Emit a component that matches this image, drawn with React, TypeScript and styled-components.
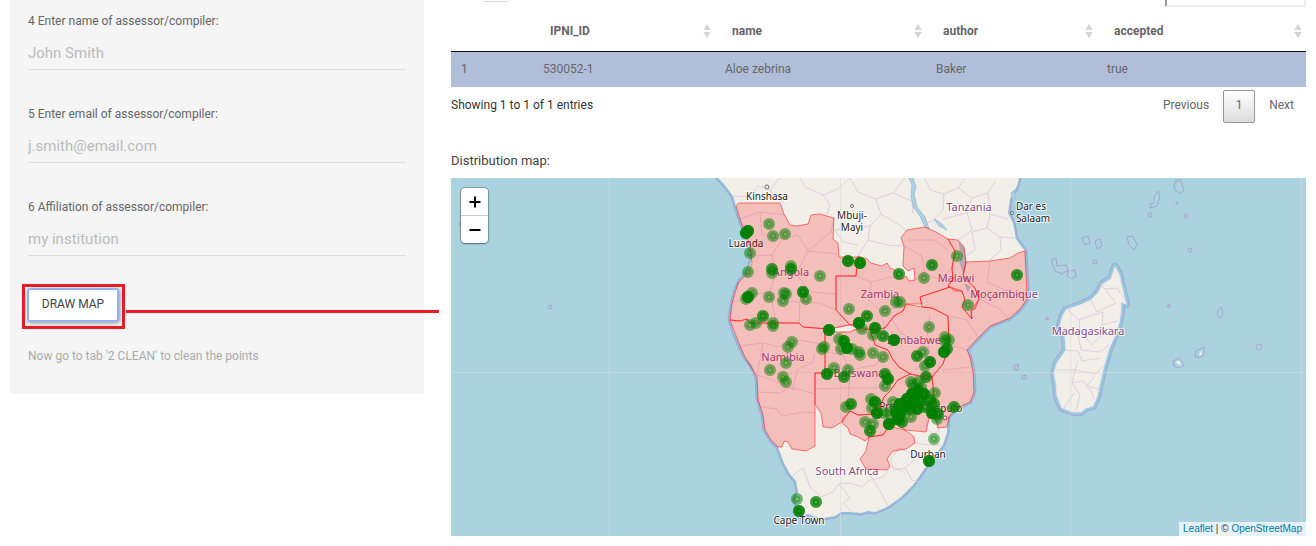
import React from 'react';
import styled, { createGlobalStyle } from 'styled-components';

const GlobalStyle = createGlobalStyle`
  *, *::before, *::after { box-sizing: border-box; }
  body {
    margin: 0;
    background: #fff;
    color: #444;
    font-family: Roboto, 'Liberation Sans', sans-serif;
    font-size: 12px;
    line-height: 18px;
  }
  button, input, select { font-family: inherit; }
`;

const Page = styled.div`
  display: grid;
  grid-template-columns: minmax(0, 414fr) minmax(0, 855fr);
  column-gap: 27px;
  align-items: start;
  padding: 0 10px 10px;
`;

const Sidebar = styled.aside`
  position: relative;
  padding: 12px 18px 29px;
  background: #f5f5f5;
`;

const Fields = styled.div`
  display: flex;
  flex-direction: column;
  gap: 35px;
`;

const Field = styled.div`
  display: flex;
  flex-direction: column;
  gap: 5px;
`;

const Label = styled.label`
  color: #666;
`;

const TextInput = styled.input`
  width: 100%;
  height: 35px;
  padding: 2px 0 0;
  border: 0;
  border-bottom: 1px solid #ddd;
  background: transparent;
  color: #666;
  font-size: 15px;
  outline: none;
  &::placeholder { color: #bbb; opacity: 1; }
`;

const Callout = styled.div`
  width: 103px;
  margin: 28px 0 0 -6px;
  padding: 1px 3px 4px 2px;
  border: 3px solid #ed1c24;
`;

const CalloutLine = styled.div`
  position: absolute;
  top: 310px;
  left: 116px;
  right: -15px;
  height: 3px;
  background: #ed1c24;
`;

const DrawButton = styled.button`
  display: block;
  width: 100%;
  height: 34px;
  padding: 0 0 2px;
  border: 2px solid #8fb3f3;
  border-radius: 3px;
  background: #fff;
  box-shadow: 1px 1px 4px rgba(0, 0, 0, 0.4);
  color: #444;
  font-size: 12px;
  text-transform: uppercase;
  white-space: nowrap;
`;

const Help = styled.p`
  margin: 18px 0 0;
  color: #aaa;
`;

const Main = styled.main`
  min-width: 0;
`;

const TableTools = styled.div`
  display: flex;
  align-items: flex-end;
  justify-content: space-between;
  height: 7px;
  overflow: hidden;
`;

const LengthSelect = styled.select`
  flex: none;
  width: 25px;
  height: 30px;
  margin: 0 0 5px 32px;
  border: 0;
  border-bottom: 1px solid #ddd;
  background: transparent;
  appearance: none;
`;

const SearchInput = styled.input`
  flex: none;
  width: 141px;
  height: 27px;
  border: 2px solid #eee;
  border-top-color: #999;
  border-left-color: #999;
  background: #fff;
`;

const DataTable = styled.table`
  width: 100%;
  table-layout: fixed;
  border-collapse: separate;
  border-spacing: 0;
  color: #666;
`;

const Col = styled.col<{ $w?: number }>`
  width: ${(p) => (p.$w ? `${p.$w}px` : 'auto')};
`;

const HeadCell = styled.th`
  height: 45px;
  padding: 4px 4px 0 17px;
  border-bottom: 1px solid #111;
  font-weight: 700;
  text-align: left;
`;

const HeadInner = styled.span`
  display: flex;
  align-items: center;
  justify-content: space-between;
`;

const Cell = styled.td`
  height: 35px;
  padding: 0 10px 2px;
  background: #b0bed9;
`;

const TableFooter = styled.div`
  display: flex;
  justify-content: space-between;
  align-items: center;
  height: 36px;
  color: #333;
`;

const Pager = styled.nav`
  display: flex;
  gap: 2px;
  padding-top: 3px;
`;

const PageButton = styled.button<{ $current?: boolean }>`
  min-width: 32px;
  height: 33px;
  padding: 0 11px 4px;
  border: 1px solid ${(p) => (p.$current ? '#979797' : 'transparent')};
  border-radius: 2px;
  background: ${(p) => (p.$current ? 'linear-gradient(#fff, #dcdcdc)' : 'transparent')};
  color: #666;
  font-size: 12px;
`;

const MapTitle = styled.h2`
  margin: 29px 0 8px;
  color: #444;
  font-size: 13px;
  font-weight: 400;
  line-height: 18px;
`;

const MapFrame = styled.div`
  position: relative;
  height: 358px;
  overflow: hidden;
  background: #aad3df;
`;

const MapSvg = styled.svg`
  display: block;
  width: 100%;
  height: 100%;
`;

const ZoomControl = styled.div`
  position: absolute;
  top: 10px;
  left: 10px;
  display: flex;
  flex-direction: column;
  border-radius: 4px;
  background: #fff;
  box-shadow: 0 0 0 1px rgba(0, 0, 0, 0.25), 0 1px 2px rgba(0, 0, 0, 0.3);
`;

const ZoomButton = styled.button`
  display: grid;
  place-items: center;
  width: 27px;
  height: 27px;
  padding: 0;
  border: 0;
  background: transparent;
  & + & { height: 28px; border-top: 1px solid #ccc; }
`;

const Attribution = styled.div`
  position: absolute;
  right: 0;
  bottom: 0;
  padding: 0 4px;
  background: rgba(255, 255, 255, 0.7);
  color: #333;
  font: 10px/14px 'Liberation Sans', sans-serif;
  a { color: #0078a8; text-decoration: none; }
`;

const fields = [
  { id: 'name', label: '4 Enter name of assessor/compiler:', hint: 'John Smith' },
  { id: 'email', label: '5 Enter email of assessor/compiler:', hint: 'j.smith@email.com' },
  { id: 'affiliation', label: '6 Affiliation of assessor/compiler:', hint: 'my institution' },
];

const headers = ['IPNI_ID', 'name', 'author', 'accepted'];
const record = ['530052-1', 'Aloe zebrina', 'Baker', 'true'];

const MAINLAND =
  'M718 178L724 184L733 196L736 206L740 219L746 234L750 246L752 258L748 272L740 281L735 292L732 305L730 320L734 332L740 346L745 357L752 366L757 378L758 398L763 415L765 430L771 440L778 447L784 463L790 474L796 481L798 492L795 499L797 507L801 512L802 517L807 514L813 516L823 518L835 516L841 512L850 512L861 513L868 511L875 512L887 507L900 498L913 485L925 468L933 457L943 445L947 432L948 417L957 408L970 402L974 392L973 372L970 358L967 350L977 339L990 326L1010 318L1020 309L1027 299L1027 286L1026 273L1025 251L1016 239L1013 223L1008 213L1010 199L1017 186L1019 178Z';

const MADAGASCAR =
  'M1115 267L1119 274L1122 287L1125 300L1126 304L1121 302L1121 312L1119 323L1116 333L1109 349L1104 366L1100 383L1097 397L1093 406L1086 408L1081 412L1073 412L1062 408L1057 396L1056 383L1054 373L1057 363L1066 350L1065 337L1060 325L1063 315L1066 310L1080 305L1091 300L1098 293L1103 284L1111 279Z';

const COUNTRIES = [
  // Angola
  'M736 206L739 203L780 203L784 214L790 225L797 226L808 224L811 215L820 214L834 218L833 239L838 243L839 257L858 257L856 276L836 276L836 310L850 325L829 329L803 327L799 323L750 323L747 319L740 321L730 320L732 303L738 283L748 273L752 263L750 246L746 236L740 219Z',
  // Zambia
  'M858 256L867 259L871 263L882 266L887 263L890 268L895 270L899 278L903 279L906 276L909 281L915 280L914 268L908 271L903 266L904 246L901 238L907 230L925 227L936 232L948 239L955 251L952 268L953 279L948 286L950 287L920 297L922 304L906 304L903 311L894 316L885 328L875 330L861 329L850 325L836 310L836 276L856 276Z',
  // Malawi
  'M948 239L958 240L964 247L966 262L963 275L968 282L975 288L979 299L975 309L971 311L972 319L962 307L965 300L962 291L955 291L948 286L953 279L952 268L955 251Z',
  // Mozambique
  'M966 262L990 261L1010 258L1018 253L1025 251L1026 273L1027 299L1020 309L1010 318L990 326L977 339L967 350L970 357L973 372L974 392L970 402L957 408L949 417L947 427L938 428L936 420L935 403L932 377L943 364L949 345L948 316L932 308L922 307L920 297L950 287L962 291L965 300L962 307L972 319L971 311L979 299L975 288L963 275Z',
  // Zimbabwe
  'M870 329L885 328L894 316L903 311L906 304L922 307L932 308L948 316L949 345L943 364L932 377L925 377L910 374L899 367L892 358L888 350L875 345Z',
  // Namibia
  'M730 320L740 321L747 319L750 323L799 323L803 327L829 329L854 324L859 329L844 332L825 331L825 373L815 373L815 446L806 451L792 449L788 442L784 441L782 447L778 447L771 440L765 430L763 415L758 400L757 377L745 357L740 346Z',
  // Botswana
  'M825 331L844 332L859 329L870 329L875 345L888 350L892 358L899 367L910 374L898 380L890 391L884 397L881 404L875 414L858 415L850 411L842 422L832 428L823 427L821 413L815 404L815 373L825 373Z',
  // Northern provinces of South Africa
  'M910 374L925 377L932 377L935 403L936 420L929 418L926 432L905 430L897 425L889 426L883 435L869 437L865 441L858 437L850 434L848 428L843 424L842 420L850 411L858 415L875 414L881 404L884 397L890 391L898 380Z',
  'M869 437L883 435L889 426L905 430L914 437L915 443L906 449L893 451L887 459L890 466L887 470L866 469L860 459L866 451Z',
];

const PROVINCES = [
  'M733 196L750 197L758 186L770 190L780 178M770 190L784 203M800 178L805 187L823 195L838 189L850 178M823 195L830 205L827 214M850 178L858 192L876 199L893 193L905 178M876 199L881 214L870 226L852 228L834 230M881 214L898 224L906 231M893 193L912 201L913 214M870 226L868 240L858 256M868 240L887 245L904 246M835 230L843 242L858 245',
  'M925 178L930 190L944 194L958 188L965 178M944 194L943 210L934 220L925 224M958 188L972 198L988 193L996 180M972 198L967 213L972 230L958 240M967 213L943 219M988 193L990 214L1008 219M990 214L987 228L972 232L975 250M987 228L1000 237L1016 238M975 250L967 255M1000 237L1001 250L990 260',
  'M740 219L760 212L785 215M760 212L762 235L782 239L798 235L808 251L838 254M752 256L772 255L782 239M772 255L775 275L796 274L808 251M732 303L750 295L770 292L775 275M770 292L776 322M796 274L810 292L836 294M776 300L800 302L799 323M808 251L831 232L834 218M800 302L820 303L836 310',
  'M856 276L871 282L890 277L899 278M871 282L869 301L880 310L885 328M904 246L922 256L925 274L915 280M925 274L940 279L952 268M880 310L903 307M907 240L935 240L948 250M979 299L998 308L1008 318M990 261L987 282L1005 290L1027 295M950 316L967 320L978 337M949 345L967 350M942 370L970 367',
  'M740 346L763 343L778 347L800 340L825 345M763 343L757 375L780 383L793 390L797 370L813 362L815 354M758 392L780 393L790 387L815 394M762 407L777 409L782 416L803 412L815 413M825 352L843 355L850 370L849 388L815 389M849 388L877 388L892 380M850 370L875 365L884 355M849 388L847 411M892 320L901 333L915 342L927 338L930 355L915 370M901 333L888 345M930 315L927 338L948 345',
  'M793 475L803 468L810 487L821 497L833 492L839 484L850 483L862 487L870 480L883 477L892 466M839 484L850 498L843 503L853 513M890 460L899 448L910 453L914 460L905 468L894 470ZM905 468L912 480L918 482M892 466L905 473M927 418L937 418L939 431L933 434L926 428ZM914 443L930 445L942 445M870 475L880 491L888 506',
  'M1100 283L1105 289L1117 288L1124 298M1105 289L1116 303L1103 309L1097 312L1091 300M1068 310L1079 320L1093 315L1103 312L1102 325L1118 321M1079 320L1080 331L1103 333L1102 325M1061 327L1078 333L1081 350L1100 352L1109 345M1080 331L1092 345L1103 333M1066 350L1078 351L1082 361L1100 358M1078 361L1075 370L1057 370M1075 370L1096 374L1103 366M1075 370L1072 383L1083 381L1091 391L1094 399M1072 383L1080 395L1076 411M1064 408L1074 393M1094 377L1087 386L1098 389',
];

const ISLETS = [
  'M1154 197L1158 191L1160 196L1157 206L1150 208L1150 204L1154 203Z',
  'M1174 184L1180 179L1184 190L1181 194L1175 190Z',
  'M1127 237L1133 236L1137 245L1134 250L1129 245Z',
  'M1082 238L1088 236L1090 243L1085 245Z',
  'M1095 241L1100 239L1102 246L1097 249Z',
  'M1051 260L1056 258L1057 266L1066 265L1068 270L1062 274L1055 271Z',
  'M1068 271L1075 270L1076 276L1071 279L1067 275Z',
  'M1218 310L1221 307L1223 313L1220 319L1217 315Z',
  'M1196 351L1204 347L1204 355L1199 358L1195 356Z',
  'M1173 361L1179 358L1184 365L1180 368L1174 366Z',
  'M1014 366L1018 364L1018 370L1014 370Z',
  'M1022 376L1026 375L1026 379L1022 379Z',
  'M1046 317L1049 319L1046 320Z',
  'M1167 307L1170 307L1169 304Z',
];

const DOTS = [
  [1150, 215, 2], [1186, 216, 2], [1190, 250, 2], [1095, 262, 2], [1177, 203, 1],
  [1259, 347, 3], [550, 307, 2], [461, 224, 2], [1176, 181, 1],
];

type MapLabel = { x: number; y: number; text: string; country?: boolean };

const LABELS: MapLabel[] = [
  { x: 767, y: 200, text: 'Kinshasa' },
  { x: 852, y: 219, text: 'Mbuji-' },
  { x: 852, y: 231, text: 'Mayi' },
  { x: 746, y: 247, text: 'Luanda' },
  { x: 1031, y: 210, text: 'Dar es' },
  { x: 1033, y: 222, text: 'Salaam' },
  { x: 799, y: 524, text: 'Cape Town' },
  { x: 928, y: 458, text: 'Durban' },
  { x: 944, y: 412, text: 'Maputo' },
  { x: 898, y: 410, text: 'Pretoria' },
  { x: 969, y: 211, text: 'Tanzania', country: true },
  { x: 791, y: 276, text: 'Angola', country: true },
  { x: 880, y: 298, text: 'Zambia', country: true },
  { x: 956, y: 282, text: 'Malawi', country: true },
  { x: 1004, y: 298, text: 'Moçambique', country: true },
  { x: 914, y: 344, text: 'Zimbabwe', country: true },
  { x: 783, y: 361, text: 'Namibia', country: true },
  { x: 859, y: 377, text: 'Botswana', country: true },
  { x: 847, y: 475, text: 'South Africa', country: true },
  { x: 1088, y: 335, text: 'Madagasikara', country: true },
];

// x, y and the number of records stacked on the spot
const POINTS = [
  [769, 224, 1], [748, 231, 4], [746, 233, 4], [773, 236, 1], [785, 234, 1], [750, 253, 1],
  [748, 272, 1], [772, 269, 2], [772, 273, 1], [791, 269, 2], [791, 266, 1], [820, 276, 1],
  [848, 261, 3], [860, 263, 4], [752, 293, 1], [748, 297, 4], [746, 299, 1], [769, 297, 1],
  [784, 293, 1], [783, 301, 1], [786, 294, 1], [803, 292, 3], [806, 299, 1], [763, 316, 2],
  [756, 323, 1], [750, 325, 1], [773, 323, 1], [773, 326, 1], [849, 309, 1], [885, 311, 1],
  [867, 316, 2], [859, 323, 4], [862, 329, 1], [875, 328, 3], [873, 335, 1], [883, 336, 2],
  [829, 330, 4], [792, 342, 1], [788, 347, 1], [822, 349, 1], [824, 347, 1], [839, 339, 1],
  [844, 341, 3], [847, 348, 4], [852, 349, 1], [841, 349, 1], [859, 352, 1], [860, 355, 1],
  [873, 353, 1], [883, 357, 1], [957, 256, 1], [932, 265, 2], [924, 278, 1], [899, 274, 2],
  [1017, 275, 2], [896, 302, 1], [900, 302, 1], [968, 305, 1], [929, 327, 1], [894, 340, 4],
  [945, 337, 1], [945, 341, 1], [949, 340, 1], [944, 352, 4], [947, 349, 2], [917, 356, 2],
  [923, 352, 1], [930, 362, 3], [925, 366, 1], [786, 363, 1], [770, 370, 1], [783, 377, 1],
  [786, 382, 1], [834, 368, 1], [827, 374, 3], [848, 370, 1], [844, 377, 2], [885, 374, 2],
  [888, 379, 3], [885, 386, 1], [851, 404, 2], [846, 407, 1], [871, 399, 1], [875, 402, 3],
  [877, 413, 4], [872, 408, 1], [865, 422, 1], [873, 424, 1], [870, 431, 2], [797, 499, 1],
  [816, 502, 2], [799, 511, 3], [926, 377, 2], [911, 382, 1], [918, 382, 1], [934, 439, 1],
  [929, 461, 4], [954, 407, 2], [893, 402, 1], [889, 424, 5], [898, 419, 5], [896, 412, 5],
  [900, 404, 4], [907, 399, 4], [912, 394, 5], [918, 391, 5], [924, 394, 4], [917, 409, 4],
  [930, 400, 2], [932, 413, 4], [938, 414, 2], [935, 393, 1], [934, 404, 2], [889, 413, 1],
  [911, 417, 1], [902, 422, 2], [909, 409, 2], [925, 407, 2], [921, 387, 1], [913, 385, 1],
  [905, 407, 3], [914, 401, 4], [920, 400, 3], [937, 419, 1], [884, 413, 1], [900, 414, 4],
];

const SortIcon = () => (
  <svg width="8" height="14" viewBox="0 0 8 14" aria-hidden="true">
    <path d="M4 0L7.700 6H.3ZM4 14L.3 8H7.700Z" fill="#d4d4d4" />
  </svg>
);

const DistributionMap = () => (
  <MapSvg viewBox="451 178 855 358" preserveAspectRatio="xMidYMid slice" role="img" aria-label="Distribution map">
    <g fill="none" stroke="#a7a6d3" strokeWidth="5" strokeLinejoin="round">
      <path d={MAINLAND} />
      <path d={MADAGASCAR} strokeWidth="8" />
    </g>
    <g fill="none" stroke="#8cc0dc" strokeWidth="3" strokeLinejoin="round">
      <path d={MAINLAND} />
      <path d={MADAGASCAR} stroke="#93c9df" strokeWidth="6" />
    </g>
    <path d={MAINLAND} fill="#f2efe9" />
    <path d={MADAGASCAR} fill="#f2efe9" stroke="#f0dfea" />
    <g fill="none" stroke="#e2cde2" strokeLinejoin="round">
      {PROVINCES.map((d) => <path key={d} d={d} />)}
    </g>
    <g fill="#aad3df" stroke="#a3bedc">
      <path d="M909 178L912 185L911 197L914 208L920 216L925 227L929 229L925 217L917 207L914 194L916 187L913 178Z" />
      <path d="M934 219L941 223L947 230L939 226Z" />
      <path d="M959 242L964 248L966 262L964 273L960 263L962 256Z" />
      <path d="M965 284L970 287L968 291Z" />
      <path d="M1011 193L1014 190L1016 197L1013 201ZM1012 204L1015 210L1012 212Z" />
    </g>
    <g fill="none" stroke="#a9a2d2" strokeLinejoin="round">
      {ISLETS.map((d) => <path key={d} d={d} />)}
      {DOTS.map(([x, y, r]) => <circle key={`${x}-${y}`} cx={x} cy={y} r={r} />)}
    </g>
    <path d="M1199 354L1202 350L1201 356ZM1176 361L1180 361L1181 365L1177 364Z" fill="#f2efe9" />
    <path d="M609.500 178V536M840.500 178V536M1070.500 178V536M1301.500 178V536M451 372.500H1306" stroke="#d9dcdc" strokeOpacity=".55" />
    <g fill="#fff" stroke="#666">
      <circle cx="767" cy="187" r="2" />
      <circle cx="852" cy="206" r="1.500" />
      <circle cx="1012" cy="213" r="1.500" />
      <circle cx="945" cy="418" r="2" />
    </g>
    <g fontFamily="'Noto Sans', sans-serif" textAnchor="middle" stroke="#fff" strokeOpacity=".8" strokeWidth="2" strokeLinejoin="round" paintOrder="stroke">
      {LABELS.map((l) => (
        <text key={l.text} x={l.x} y={l.y} fontSize={l.country ? 11 : 10} fill={l.country ? '#83488a' : '#222'}>{l.text}</text>
      ))}
    </g>
    <g fill="#f00" fillOpacity=".2" stroke="#f00" strokeOpacity=".5" strokeLinejoin="round">
      {COUNTRIES.map((d) => <path key={d} d={d} />)}
    </g>
    <path d="M850 325L858 328L850 332L834 332L829 329Z" fill="#f2efe9" stroke="#f66" />
    <g fill="green" fillOpacity=".3" stroke="green" strokeOpacity=".5" strokeWidth="5">
      {POINTS.flatMap(([x, y, n]) =>
        Array.from({ length: n }, (_, i) => (
          <circle key={`${x}-${y}-${i}`} cx={x} cy={y} r="3.500" />
        )),
      )}
    </g>
  </MapSvg>
);

export default function App() {
  return (
    <>
      <GlobalStyle />
      <Page>
        <Sidebar>
          <Fields>
            {fields.map((f) => (
              <Field key={f.id}>
                <Label htmlFor={f.id}>{f.label}</Label>
                <TextInput id={f.id} type="text" placeholder={f.hint} />
              </Field>
            ))}
          </Fields>
          <Callout>
            <DrawButton type="button">Draw map</DrawButton>
          </Callout>
          <CalloutLine />
          <Help>Now go to tab '2 CLEAN' to clean the points</Help>
        </Sidebar>
        <Main>
          <TableTools>
            <LengthSelect aria-label="Entries per page" />
            <SearchInput type="search" aria-label="Search" />
          </TableTools>
          <DataTable>
            <colgroup>
              <Col $w={82} />
              <Col $w={182} />
              <Col $w={211} />
              <Col $w={171} />
              <Col />
            </colgroup>
            <thead>
              <tr>
                <HeadCell aria-label="Row" />
                {headers.map((h) => (
                  <HeadCell key={h} scope="col">
                    <HeadInner>{h}<SortIcon /></HeadInner>
                  </HeadCell>
                ))}
              </tr>
            </thead>
            <tbody>
              <tr>
                <Cell>1</Cell>
                {record.map((v) => <Cell key={v}>{v}</Cell>)}
              </tr>
            </tbody>
          </DataTable>
          <TableFooter>
            <span>Showing 1 to 1 of 1 entries</span>
            <Pager aria-label="Table pages">
              <PageButton type="button">Previous</PageButton>
              <PageButton type="button" $current>1</PageButton>
              <PageButton type="button">Next</PageButton>
            </Pager>
          </TableFooter>
          <MapTitle>Distribution map:</MapTitle>
          <MapFrame>
            <DistributionMap />
            <ZoomControl>
              <ZoomButton type="button" aria-label="Zoom in">
                <svg width="12" height="12" viewBox="0 0 12 12"><path d="M6 .5V11.500M.5 6H11.500" stroke="#000" strokeWidth="2" /></svg>
              </ZoomButton>
              <ZoomButton type="button" aria-label="Zoom out">
                <svg width="12" height="12" viewBox="0 0 12 12"><path d="M.5 6H11.500" stroke="#000" strokeWidth="2" /></svg>
              </ZoomButton>
            </ZoomControl>
            <Attribution>
              <a href="#leaflet">Leaflet</a> | © <a href="#osm">OpenStreetMap</a>
            </Attribution>
          </MapFrame>
        </Main>
      </Page>
    </>
  );
}
